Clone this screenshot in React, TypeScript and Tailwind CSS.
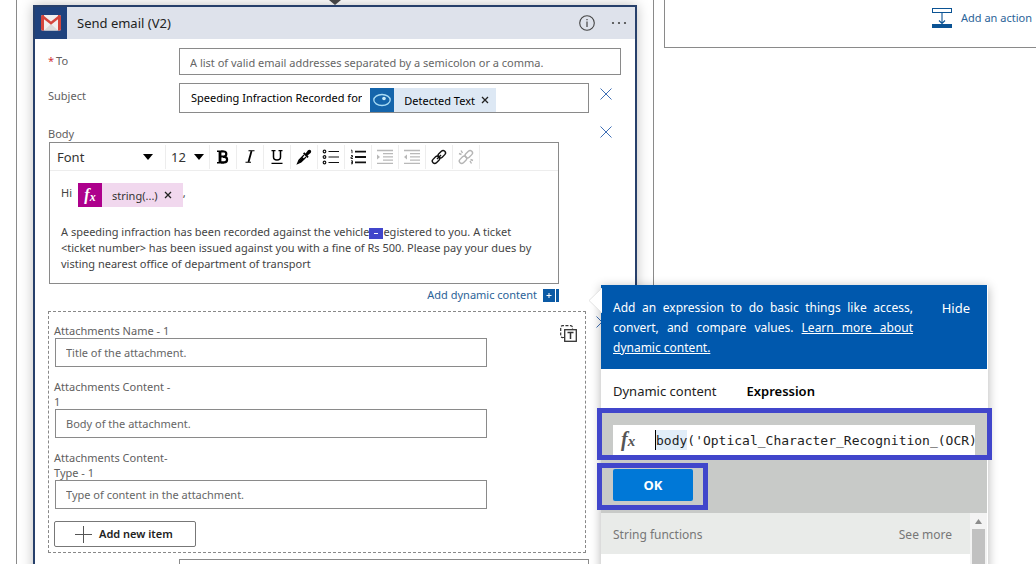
import React from "react";

function CloseIcon() {
  return (
    <svg width="12" height="12" viewBox="0 0 12 12" fill="none" stroke="#3f6fb5" strokeWidth="1" aria-hidden="true">
      <path d="M0.5 0.5 11.5 11.5M11.5 0.5 0.5 11.5" />
    </svg>
  );
}

function TokenClose({ label }: { label: string }) {
  return (
    <button type="button" aria-label={label} className="flex items-center">
      <svg width="8" height="8" viewBox="0 0 8 8" stroke="#222" strokeWidth="1.3" aria-hidden="true">
        <path d="M1 1 7 7M7 1 1 7" />
      </svg>
    </button>
  );
}

function GmailIcon() {
  return (
    <svg width="22" height="18" viewBox="0 0 22 18" aria-hidden="true">
      <rect x="1" y="1" width="20" height="15.5" rx="1.5" fill="#f1eeee" />
      <path d="M4 16.5 11 10l7 6.5z" fill="#dcd8d8" />
      <path d="M1 2.5A1.5 1.5 0 0 1 2.5 1H4v15.5H2.5A1.5 1.5 0 0 1 1 15zM21 2.5A1.5 1.5 0 0 0 19.5 1H18v15.5h1.5A1.5 1.5 0 0 0 21 15z" fill="#d5453c" />
      <path d="M2.3 2.2 11 9.2l8.7-7" fill="none" stroke="#d5453c" strokeWidth="2.6" />
    </svg>
  );
}

function ToolCell({ label, children }: { label: string; children: React.ReactNode }) {
  return (
    <button
      type="button"
      aria-label={label}
      className="flex h-6 w-[27px] shrink-0 items-center justify-center border-r border-[#ededed] text-black"
    >
      {children}
    </button>
  );
}

function Indent({ flip = false }: { flip?: boolean }) {
  return (
    <svg width="18" height="16" viewBox="0 0 18 16" stroke="#b9b9b9" strokeWidth="1.3" fill="#b9b9b9" aria-hidden="true">
      <path d="M1 1.5h16M7 4.7h10M7 7.9h10M7 11.1h10M1 14.3h16" />
      <path d={flip ? "M4 5.5v5L1 8z" : "M1 5.5v5L4 8z"} stroke="none" />
    </svg>
  );
}

function LinkIcon({ broken = false }: { broken?: boolean }) {
  const color = broken ? "#b5b5b5" : "#111";
  return (
    <svg width="16" height="16" viewBox="0 0 16 16" fill="none" stroke={color} strokeWidth="1.4" aria-hidden="true">
      <rect x="-4.2" y="-2.4" width="8.4" height="4.8" rx="2.4" transform="translate(5 10.8) rotate(-45)" />
      <rect x="-4.2" y="-2.4" width="8.4" height="4.8" rx="2.4" transform="translate(10.8 5.2) rotate(-45)" />
      {broken ? (
        <path d="M3 1.5 4.5 4M1 4.5 3.5 5.5M12 12l1.5 2.5M12.5 10.5 15 11.5" />
      ) : (
        <path d="M6 10 10 6" />
      )}
    </svg>
  );
}

function ListIcon({ numbered = false }: { numbered?: boolean }) {
  return (
    <svg width="18" height="16" viewBox="0 0 18 16" fill="none" stroke="#111" aria-hidden="true">
      {numbered ? (
        <>
          <path d="M6 2.7h11M6 8h11M6 13.3h11" strokeWidth="1.8" />
          <path d="M2 1.2h1v3M2 6.5h1.5v1.5H2v1.5h2M2 11.8h1.5v3H2M2 13.3h1.5" strokeWidth="0.9" />
        </>
      ) : (
        <>
          <path d="M6.5 2.5H17M6.5 8H17M6.5 13.5H17" strokeWidth="1.2" />
          <g strokeWidth="1.2">
            <circle cx="2.5" cy="2.5" r="1.3" />
            <circle cx="2.5" cy="8" r="1.3" />
            <circle cx="2.5" cy="13.5" r="1.3" />
          </g>
        </>
      )}
    </svg>
  );
}

function Caret() {
  return (
    <svg width="10" height="6" viewBox="0 0 10 6" className="pointer-events-none shrink-0" aria-hidden="true">
      <path d="M0 0h10L5 6z" fill="#000" />
    </svg>
  );
}

const attachments = [
  { id: "att-name", label: "Attachments Name - 1", hint: "Title of the attachment." },
  { id: "att-content", label: "Attachments Content - 1", hint: "Body of the attachment." },
  { id: "att-type", label: "Attachments Content-Type - 1", hint: "Type of content in the attachment." },
];

function Toolbar() {
  return (
    <div className="flex h-7 items-center border-b border-[#ededed] pl-[3px]">
      <div className="flex h-6 w-[113px] items-center justify-between border-r border-[#ededed] pr-3">
        <select aria-label="Font" className="w-[90px] appearance-none bg-transparent pl-1 text-[13px] text-[#333] outline-none">
          <option>Font</option>
        </select>
        <Caret />
      </div>
      <div className="flex h-6 w-11 items-center justify-between border-r border-[#ededed] pr-[5px] pl-[5px]">
        <select aria-label="Font size" className="w-5 appearance-none bg-transparent text-[13px] text-[#333] outline-none">
          <option>12</option>
        </select>
        <Caret />
      </div>
      <ToolCell label="Bold">
        <svg width="14" height="14" viewBox="0 0 14 14" fill="none" stroke="#000" aria-hidden="true">
          <path d="M1 1.2h6.5M1 12.8h7" strokeWidth="1.6" />
          <path d="M4 1v12" strokeWidth="2.8" />
          <path d="M5 1.5h2.8a2.5 2.5 0 0 1 0 5H5M7 6.8h1.3a2.8 2.8 0 0 1 0 5.6H5" strokeWidth="2.2" />
        </svg>
      </ToolCell>
      <ToolCell label="Italic">
        <svg width="10" height="13" viewBox="0 0 10 13" fill="none" stroke="#000" aria-hidden="true">
          <path d="M3.5 0.7h6M0.5 12.3h5.5" strokeWidth="1.1" />
          <path d="M6.5 1 3.5 12" strokeWidth="1.8" />
        </svg>
      </ToolCell>
      <ToolCell label="Underline">
        <svg width="12" height="14" viewBox="0 0 12 14" fill="none" stroke="#000" aria-hidden="true">
          <path d="M0.5 0.7h4M7.5 0.7h4M0.5 13.3h11" strokeWidth="1.2" />
          <path d="M2.5 1v6c0 4 7 4 7 0V1" strokeWidth="1.5" />
        </svg>
      </ToolCell>
      <ToolCell label="Text color">
        <svg width="16" height="16" viewBox="0 0 16 16" aria-hidden="true">
          <path d="M8 6 3 11l-1.5 3.5L5 13l5-5" fill="#fff" stroke="#000" strokeWidth="1.2" />
          <path d="M2 14.5 3 11.5 6.5 8l2 2L5 13z" fill="#000" />
          <path d="M7 4.5 8.3 3.2l1.3 1.2L12 1.3c2-1.6 4.2.6 2.6 2.6L11.5 6.5l1.2 1.3-1.3 1.3z" fill="#000" />
        </svg>
      </ToolCell>
      <ToolCell label="Bulleted list"><ListIcon /></ToolCell>
      <ToolCell label="Numbered list"><ListIcon numbered /></ToolCell>
      <ToolCell label="Increase indent"><Indent /></ToolCell>
      <ToolCell label="Decrease indent"><Indent flip /></ToolCell>
      <ToolCell label="Insert link"><LinkIcon /></ToolCell>
      <ToolCell label="Remove link"><LinkIcon broken /></ToolCell>
    </div>
  );
}

function ExpressionPanel() {
  return (
    <aside className="absolute -top-[3px] left-[553px] z-10 w-[387px] border-r border-white bg-white shadow-[0_2px_10px_rgba(0,0,0,0.3)]">
      <svg width="14" height="26" viewBox="0 0 14 26" className="absolute top-[3px] -left-[13px]" aria-hidden="true">
        <path d="M14 0 1 12.5 14 25z" fill="#fff" />
        <path d="M14 0 1 12.5 14 25" fill="none" stroke="#e2e2e2" strokeWidth="1" />
      </svg>
      <div className="flex h-[84px] items-start justify-between bg-[#0058ad] pt-[13px] pr-[17px] pl-3 text-white">
        <p className="w-[300px] text-justify text-[12px] leading-5">
          Add an expression to do basic things like access, convert, and compare values.{" "}
          <a href="#learn" className="underline">Learn more about dynamic content.</a>
        </p>
        <button type="button" className="text-[13px] leading-5">Hide</button>
      </div>
      <div className="flex h-[39px] items-center gap-[30px] px-3 pt-1 text-[13px] text-[#222]" role="tablist">
        <button type="button" role="tab" aria-selected="false">Dynamic content</button>
        <button type="button" role="tab" aria-selected="true" className="font-semibold text-black">Expression</button>
      </div>
      <div className="relative h-[105px] bg-[#c8cac8] px-3 pt-[17px]">
        <div className="flex h-[30px] items-center bg-white">
          <label htmlFor="expression" className="w-[42px] pl-2 font-['Liberation_Serif',serif] text-[20px] leading-6 font-bold text-[#555] italic">
            f<span className="text-[15px]">x</span>
          </label>
          <span className="-mr-px h-5 w-[2px] shrink-0 bg-black" />
          <input
            id="expression"
            defaultValue="body('Optical_Character_Recognition_(OCR)_Text')"
            className="h-5 min-w-0 flex-1 bg-linear-to-r from-[#e1edf8] from-[31px] to-white to-[31px] font-['DejaVu_Sans_Mono',monospace] text-[13px] text-[#222] outline-none"
          />
        </div>
        <button type="button" className="mt-[14px] h-8 w-20 rounded-[2px] bg-[#0078d7] text-[13px] font-bold text-white">OK</button>
        <span className="pointer-events-none absolute top-0 -right-[5px] -left-1 h-[52px] border-[5px] border-[#4146cb]" />
        <span className="pointer-events-none absolute top-[55px] -left-1 h-[47px] w-[111px] border-[5px] border-[#4146cb]" />
      </div>
      <div className="flex">
        <div className="flex-1 pb-10">
          <div className="flex h-[41px] items-center justify-between bg-[#e9ebe9] pt-[2px] pr-[18px] pl-3 text-[12px] text-[#777]">
            <span>String functions</span>
            <button type="button">See more</button>
          </div>
        </div>
        <div className="flex w-[17px] flex-col items-center gap-[5px] bg-[#f3f3f3] pt-[6px]">
          <svg width="7" height="5" viewBox="0 0 7 5" aria-hidden="true"><path d="M0 5h7L3.5 0z" fill="#8c8c8c" /></svg>
          <div className="w-[13px] flex-1 bg-[#c1c1c1]" />
        </div>
      </div>
    </aside>
  );
}

function EmailCard() {
  const field = "border border-[#8a8a8a] bg-white text-[11px] text-black placeholder:text-[#666] outline-none";
  return (
    <section className="mt-[5px] border-2 border-[#27406b] bg-white shadow-[0_0_12px_rgba(0,0,0,0.25)]">
      <header className="flex h-8 items-center bg-[#dee2eb]">
        <div className="flex h-8 w-8 items-center justify-center bg-[#1f427d]"><GmailIcon /></div>
        <h1 className="flex-1 pt-px pl-[10px] text-[13px] text-[#222]">Send email (V2)</h1>
        <button type="button" aria-label="Information" className="mr-4">
          <svg width="16" height="16" viewBox="0 0 16 16" fill="none" stroke="#444" aria-hidden="true">
            <circle cx="8" cy="8" r="7.3" strokeWidth="1.1" />
            <path d="M8 6.5V12M8 4v1.2" strokeWidth="1.2" />
          </svg>
        </button>
        <button type="button" aria-label="More options" className="mr-2">
          <svg width="16" height="4" viewBox="0 0 16 4" fill="#444" aria-hidden="true">
            <circle cx="2" cy="2" r="1.1" /><circle cx="8" cy="2" r="1.1" /><circle cx="14" cy="2" r="1.1" />
          </svg>
        </button>
      </header>

      <div className="pt-[9px] pr-[14px] pl-[13px] text-[11px] leading-4 text-[#5f6060]">
        <div className="flex">
          <label htmlFor="to" className="flex w-[131px] shrink-0 gap-[2px] pt-[5px]"><span className="text-[#d13438]">*</span>To</label>
          <input id="to" className={`${field} h-[27px] min-w-0 flex-1 px-[10px] pt-px`} placeholder="A list of valid email addresses separated by a semicolon or a comma." />
        </div>

        <div className="mt-2 flex">
          <label htmlFor="subject" className="w-[131px] shrink-0 pt-[5px]">Subject</label>
          <div className="flex h-[30px] min-w-0 flex-1 items-end border border-[#8a8a8a] pl-[11px]">
            <input id="subject" defaultValue="Speeding Infraction Recorded for" className="mb-[6px] field-sizing-content text-[11px] text-black outline-none" />
            <span className="ml-2 flex h-6 items-center bg-[#dde8f4] text-black">
              <span className="flex h-6 w-6 items-center justify-center bg-[#1565ab]">
                <svg width="18" height="14" viewBox="0 0 18 14" fill="none" stroke="#a9dcf5" strokeWidth="1.3" aria-hidden="true">
                  <ellipse cx="9" cy="7" rx="8.2" ry="5.5" />
                  <circle cx="11" cy="5.5" r="1.8" fill="#c9ecfa" stroke="none" />
                </svg>
              </span>
              <span className="px-[10px] pt-px pr-[6px]">Detected Text</span>
              <TokenClose label="Remove Detected Text" />
              <span className="w-[7px]" />
            </span>
          </div>
          <button type="button" aria-label="Clear subject" className="mr-[9px] ml-[11px] self-start pt-[5px]"><CloseIcon /></button>
        </div>

        <div className="mt-[13px] flex h-4 items-start justify-between pr-[9px]">
          <span id="body-label">Body</span>
          <button type="button" aria-label="Clear body"><CloseIcon /></button>
        </div>

        <div className="mr-[62px] ml-px h-[142px] border border-[#8a8a8a]">
          <Toolbar />
          <div role="textbox" aria-multiline="true" aria-labelledby="body-label" contentEditable suppressContentEditableWarning className="pt-3 pr-5 pl-[11px] text-[#444] outline-none">
            <div className="flex h-6">
              <span className="pt-[2px]">Hi</span>
              <span contentEditable={false} className="ml-[6px] flex h-6 items-center bg-[#f1d8ee] text-[#333]">
                <span className="flex h-6 w-6 items-center justify-center bg-[#ad008c] font-['Liberation_Serif',serif] text-[16px] font-bold text-white italic">
                  f<span className="pt-[3px] text-[12px]">x</span>
                </span>
                <span className="pt-px pr-[6px] pl-[10px]">string(...)</span>
                <TokenClose label="Remove expression" />
                <span className="w-[11px]" />
              </span>
              <span className="pt-[2px]">,</span>
            </div>
            <p className="mt-[17px]">
              A speeding infraction has been recorded against the vehicle
              <span contentEditable={false} className="inline-flex h-[11px] w-[14px] items-center justify-center bg-[#4146cb] align-middle">
                <span className="h-px w-1 bg-white" />
              </span>
              egistered to you. A ticket &lt;ticket number&gt; has been issued against you with a fine of Rs 500. Please pay your dues by visting nearest office of department of transport
            </p>
          </div>
        </div>

        <div className="relative mr-[62px] h-[27px] pt-[3px]">
          <button type="button" className="ml-auto flex h-4 items-center gap-[6px] text-[#2b6398]">
            Add dynamic content
            <svg width="16" height="13" viewBox="0 0 16 13" aria-hidden="true">
              <path d="M0 0h12v13H0zM13 0h3v13h-3z" fill="#0b5aa5" />
              <path d="M6 4v5M3.5 6.5h5" stroke="#fff" strokeWidth="1" />
            </svg>
          </button>
          <div className="absolute top-1 left-0"><ExpressionPanel /></div>
        </div>

        <div className="mr-[13px] flex items-start">
          <div className="flex flex-1 items-start justify-between border border-dashed border-[#888] pt-[11px] pr-2 pb-[5px] pl-[5px]">
            <div className="flex flex-col gap-3">
              {attachments.map((a) => (
                <div key={a.id} className="flex flex-col">
                  <label htmlFor={a.id} className="w-[122px] leading-[15px]">{a.label}</label>
                  <input id={a.id} placeholder={a.hint} className={`${field} ml-px h-[29px] w-[432px] px-[10px]`} />
                </div>
              ))}
              <button type="button" className="flex h-[26px] w-[142px] items-center rounded-[2px] border border-[#777] pl-5 text-[11px] font-semibold text-[#222]">
                <svg width="17" height="17" viewBox="0 0 17 17" stroke="#555" strokeWidth="1" className="mr-[7px]" aria-hidden="true"><path d="M8.5 0v17M0 8.5h17" /></svg>
                Add new item
              </button>
            </div>
            <button type="button" aria-label="Switch to array input" className="mt-[2px]">
              <svg width="17" height="17" viewBox="0 0 17 17" fill="none" stroke="#333" aria-hidden="true">
                <path d="M4 12.5H3A2 2 0 0 1 0.7 10V3A2 2 0 0 1 3 0.7H10.5A2 2 0 0 1 12.5 3V4" strokeWidth="1.2" strokeDasharray="3 1.5" />
                <rect x="4.7" y="4.7" width="11.6" height="11.6" fill="#fff" strokeWidth="1.3" />
                <path d="M7.5 7.5h6M10.5 7.5v6.5" strokeWidth="1.5" />
              </svg>
            </button>
          </div>
          <button type="button" aria-label="Delete attachment" className="mt-[5px] ml-[10px]"><CloseIcon /></button>
        </div>

        <div className="mt-[6px] flex pr-8 pl-[131px]">
          <input aria-label="Importance" className={`${field} h-[30px] min-w-0 flex-1 px-[10px]`} />
        </div>
      </div>
    </section>
  );
}

export default function App() {
  return (
    <main className="grid h-screen grid-cols-[638fr_372fr] gap-[10px] overflow-hidden bg-white pl-4 font-['Noto_Sans','Open_Sans',sans-serif]">
      <div className="relative border-x border-[#8a8a8a] px-4">
        <svg width="12" height="5" viewBox="0 0 12 5" className="absolute top-0 left-1/2 -translate-x-1/2" aria-hidden="true">
          <path d="M0 0h12L6 5z" fill="#444" />
        </svg>
        <EmailCard />
      </div>
      <div className="flex h-12 items-start justify-end self-start border-b border-l border-[#8a8a8a] pt-2 pr-1">
        <button type="button" className="flex items-center gap-[9px] text-[11px] text-[#2b6398]">
          <svg width="20" height="20" viewBox="0 0 20 20" fill="none" stroke="#0b5394" aria-hidden="true">
            <rect x="0.5" y="0.5" width="19" height="4" />
            <path d="M10 5v10M7 12.5l3 3 3-3" strokeWidth="1.1" />
            <path d="M0 16h20v4H0z" fill="#0b5394" stroke="none" />
          </svg>
          Add an action
        </button>
      </div>
    </main>
  );
}
